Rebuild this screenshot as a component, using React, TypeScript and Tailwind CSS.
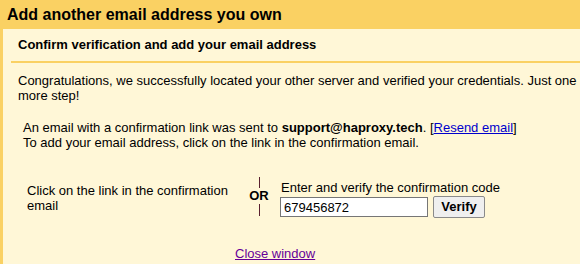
export default function App() {
  return (
    <div className="w-[580px] h-[264px] overflow-hidden bg-[#fad163] font-['Liberation_Sans',Arial,sans-serif] text-[13px] text-black">
      <div className="h-[29px] pl-[7px] pt-[5px] text-[16px] font-bold leading-[19px]">
        Add another email address you own
      </div>
      <div className="ml-[3px] h-[235px] bg-[#fff7d7] pl-[8px]">
        <div className="pl-[7px] pt-[8px] pb-[8px] font-bold leading-[16px]">
          Confirm verification and add your email address
        </div>
        <div className="h-[2px] bg-[#fad163]" />
        <div className="pl-[7px] pt-[10px] leading-[15px]">
          Congratulations, we successfully located your other server and verified your credentials. Just one more step!
        </div>
        <div className="pl-[12px] pt-[17px] leading-[15px]">
          <div>
            An email with a confirmation link was sent to <b>support@haproxy.tech</b>. [
            <a href="#" className="text-[#0000cc] underline">Resend email</a>]
          </div>
          <div>To add your email address, click on the link in the confirmation email.</div>
        </div>
        <div className="flex items-start pt-[27px] pl-[16px]">
          <div className="w-[221px] pt-[6px] leading-[15px]">Click on the link in the confirmation email</div>
          <div className="w-[22px] flex flex-col items-center">
            <div className="w-px h-[11px] bg-[#5a2030]" />
            <div className="font-bold text-[13px] leading-[14px] py-px">OR</div>
            <div className="w-px h-[12px] bg-[#5a2030]" />
          </div>
          <div className="pl-[10px] pt-[3px]">
            <div className="pl-px leading-[15px]">Enter and verify the confirmation code</div>
            <div className="flex items-center gap-[5px] mt-[1px]">
              <input
                defaultValue="679456872"
                className="w-[148px] h-[20px] border border-[#767676] bg-white px-[3px] text-[13px] leading-[15px] outline-none"
              />
              <button className="w-[52px] h-[22px] border border-[#8a8a8a] rounded-[2px] bg-[#efefef] font-bold text-[13px]">
                Verify
              </button>
            </div>
          </div>
        </div>
        <div className="pt-[28px] pl-[224px] leading-[15px]">
          <a href="#" className="text-[#660099] underline">Close window</a>
        </div>
      </div>
    </div>
  );
}
